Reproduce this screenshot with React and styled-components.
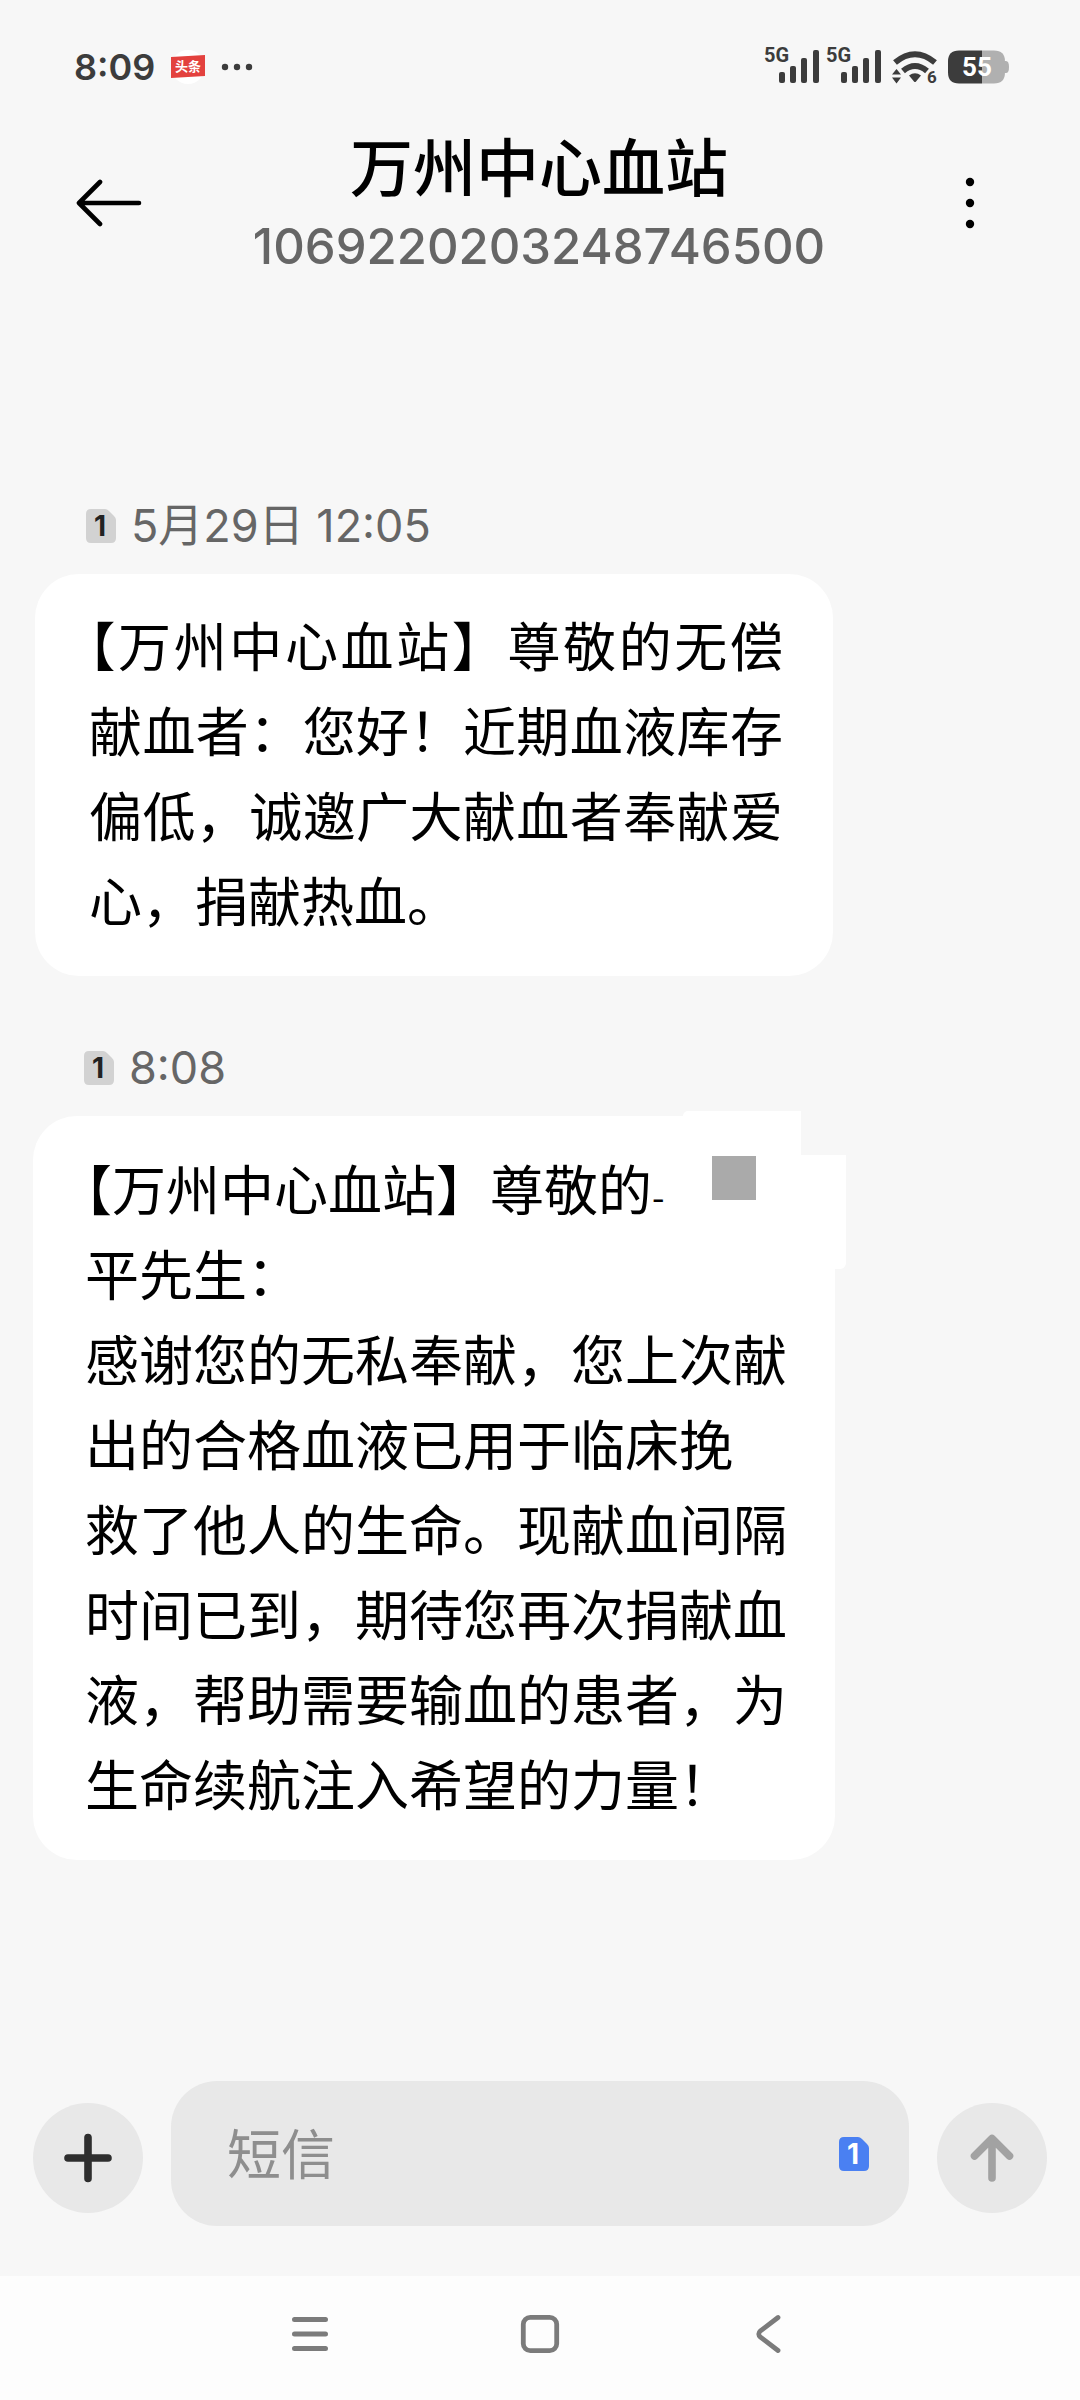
import styled, { createGlobalStyle } from 'styled-components';

const messages = [
  {
    id: 1,
    date: '5月29日 12:05',
    lines: [
      '【万州中心血站】尊敬的无偿献血者：您好！近期血液库存偏低，诚邀广大献血者奉献爱心，捐献热血。',
    ],
  },
  {
    id: 2,
    date: '8:08',
    masked: true,
    lines: [
      '【万州中心血站】尊敬的',
      '平先生：',
      '感谢您的无私奉献，您上次献出的合格血液已用于临床挽',
      '救了他人的生命。现献血间隔时间已到，期待您再次捐献血液，帮助需要输血的患者，为生命续航注入希望的力量！',
    ],
  },
];

const Signal = () => (
  <svg width="56" height="48" viewBox="0 -1 56 48" aria-hidden="true">
    <SmallLabel x="0" y="18">
      5G
    </SmallLabel>
    <g fill="#3c3c3c">
      <rect x="15" y="28" width="6" height="11" rx="2" />
      <rect x="26" y="22" width="6" height="17" rx="2" />
      <rect x="37" y="14" width="6" height="25" rx="2" />
      <rect x="49" y="6" width="6" height="33" rx="2" />
    </g>
  </svg>
);

const Wifi = () => (
  <svg width="46" height="48" viewBox="0 -1 46 48" aria-hidden="true">
    <g fill="none" stroke="#3c3c3c" strokeWidth="6">
      <path d="M3 18.5Q23 2 43 18.5" />
      <path d="M11 27Q23 17 35 27" />
    </g>
    <path
      d="M17 31.5Q23 27 29 31.5L24 37.6Q23 38.6 22 37.6Z"
      fill="#3c3c3c"
    />
    <path d="M0 30.5L4.5 25L9 30.5ZM0 33.5L4.5 39.5L9 33.5Z" fill="#3c3c3c" />
    <WifiLabel x="35" y="39">
      6
    </WifiLabel>
  </svg>
);

const Battery = () => (
  <svg width="62" height="34" viewBox="0 0 62 34" aria-label="55%">
    <path d="M56 11h2q3 0 3 6t-3 6h-2z" fill="#b0b0b0" />
    <path d="M34 0.5h12q11 0 11 11v11q0 11-11 11H34z" fill="#b0b0b0" />
    <path d="M34 0.5H11q-11 0-11 11v11q0 11 11 11h23z" fill="#3c3c3c" />
    <BatteryLabel x="29" y="26" textAnchor="middle">
      55
    </BatteryLabel>
  </svg>
);

const NewsBadge = () => (
  <svg width="36" height="36" viewBox="0 0 36 36" aria-hidden="true">
    <circle cx="18" cy="18" r="17" fill="#fff" />
    <path d="M1 8L35 6V27L1 29Z" fill="#e3413e" />
    <NewsLabel x="18" y="22" textAnchor="middle">
      头条
    </NewsLabel>
  </svg>
);

const SimBadge = ({ fill, color }) => (
  <svg width="30" height="34" viewBox="0 0 30 34" aria-label="SIM 1">
    <path
      d="M5 0H19Q21 0 23 2L28 7Q30 9 30 11V29Q30 34 25 34H5Q0 34 0 29V5Q0 0 5 0Z"
      fill={fill}
    />
    <SimLabel x="14" y="27" textAnchor="middle" fill={color}>
      1
    </SimLabel>
  </svg>
);

const Message = ({ message }) => (
  <Item $masked={message.masked}>
    <Meta>
      <SimBadge fill="#d2d2d2" color="#222" />
      <time>{message.date}</time>
    </Meta>
    <Bubble $masked={message.masked}>
      {message.lines.map((line, i) => (
        <Line key={line}>
          {line}
          {message.masked && i === 0 && <Trace>-</Trace>}
        </Line>
      ))}
      {message.masked && (
        <>
          <Notch />
          <TopPatch />
          <SidePatch />
          <GreySquare />
        </>
      )}
    </Bubble>
  </Item>
);

const App = () => {
  return (
    <Page lang="zh-CN">
      <GlobalStyle />
      <StatusBar>
        <StatusGroup>
          <Clock>8:09</Clock>
          <NewsBadge />
          <svg width="32" height="8" viewBox="0 0 32 8" aria-hidden="true">
            <g fill="#3c3c3c">
              <circle cx="4" cy="4" r="3.2" />
              <circle cx="16" cy="4" r="3.2" />
              <circle cx="28" cy="4" r="3.2" />
            </g>
          </svg>
        </StatusGroup>
        <Indicators>
          <Signals>
            <Signal />
            <Signal />
          </Signals>
          <Wifi />
          <Battery />
        </Indicators>
      </StatusBar>

      <Header>
        <IconButton type="button" aria-label="返回">
          <svg width="66" height="50" viewBox="0 0 66 50">
            <path
              d="M24 4L3 25L24 46M4 25H63"
              fill="none"
              stroke="#000"
              strokeWidth="4.6"
              strokeLinecap="round"
              strokeLinejoin="round"
            />
          </svg>
        </IconButton>
        <Heading>
          <Title>万州中心血站</Title>
          <Number>1069220203248746500</Number>
        </Heading>
        <IconButton type="button" aria-label="更多">
          <svg width="66" height="52" viewBox="0 0 66 52">
            <circle cx="34" cy="5" r="4.2" />
            <circle cx="34" cy="26" r="4.2" />
            <circle cx="34" cy="47" r="4.2" />
          </svg>
        </IconButton>
      </Header>

      <List>
        {messages.map(message => (
          <Message key={message.id} message={message} />
        ))}
      </List>

      <Composer>
        <RoundButton type="button" aria-label="添加">
          <svg width="50" height="50" viewBox="0 0 50 50">
            <path
              d="M25 4.5V45.5M5 25H45"
              stroke="#2e2e2e"
              strokeWidth="7.6"
              strokeLinecap="round"
            />
          </svg>
        </RoundButton>
        <Field>
          <Input type="text" placeholder="短信" aria-label="短信" />
          <SimBadge fill="#4a80f2" color="#fff" />
        </Field>
        <RoundButton type="button" aria-label="发送">
          <svg width="50" height="50" viewBox="0 0 50 50">
            <path
              d="M25 45V6M7.5 23L25 5.5L42.5 23"
              fill="none"
              stroke="#a2a2a2"
              strokeWidth="7.6"
              strokeLinecap="round"
              strokeLinejoin="round"
            />
          </svg>
        </RoundButton>
      </Composer>

      <NavBar>
        <NavButton type="button" aria-label="最近任务">
          <svg width="40" height="40" viewBox="0 0 40 40">
            <path
              d="M4.5 5.5H35.5M4.5 20H35.5M4.5 34.5H35.5"
              stroke="#7b7b7b"
              strokeWidth="5"
              strokeLinecap="round"
            />
          </svg>
        </NavButton>
        <NavButton type="button" aria-label="主页">
          <svg width="40" height="40" viewBox="0 0 40 40">
            <rect
              x="3.3"
              y="3.3"
              width="33.4"
              height="33.4"
              rx="7"
              fill="none"
              stroke="#7b7b7b"
              strokeWidth="4.8"
            />
          </svg>
        </NavButton>
        <NavButton type="button" aria-label="后退">
          <svg width="40" height="40" viewBox="0 0 40 40">
            <path
              d="M28 3.5L10.5 16.8Q7 20 10.5 23.2L28 36.5"
              fill="none"
              stroke="#7b7b7b"
              strokeWidth="4.8"
              strokeLinecap="round"
            />
          </svg>
        </NavButton>
      </NavBar>
    </Page>
  );
};

export default App;

const GlobalStyle = createGlobalStyle`
  body {
    margin: 0;
    background-color: #f7f7f7;
    font-family: Inter, 'Noto Sans CJK SC', sans-serif;
  }

  * {
    box-sizing: border-box;
  }

  svg {
    display: block;
    flex-shrink: 0;
  }
`;

const Page = styled.div`
  display: flex;
  flex-direction: column;
  min-height: 100vh;
`;

const StatusBar = styled.div`
  display: flex;
  align-items: center;
  justify-content: space-between;
  height: 125px;
  padding: 8px 70px 0 74px;
`;

const StatusGroup = styled.div`
  display: flex;
  align-items: center;
  gap: 15px;
`;

const Indicators = styled.div`
  display: flex;
  align-items: center;
  gap: 10px;
`;

const Signals = styled.div`
  display: flex;
  gap: 6px;
`;

const Clock = styled.span`
  font-size: 36px;
  font-weight: 600;
  line-height: 44px;
  color: #3c3c3c;
`;

const SmallLabel = styled.text`
  font-family: Roboto, sans-serif;
  font-size: 20px;
  font-weight: 700;
  fill: #3c3c3c;
`;

const WifiLabel = styled(SmallLabel)`
  font-size: 17px;
`;

const BatteryLabel = styled(SmallLabel)`
  font-size: 26px;
  fill: #fff;
`;

const NewsLabel = styled.text`
  font-family: 'Noto Sans CJK SC', sans-serif;
  font-size: 13px;
  font-weight: 700;
  fill: #fff;
`;

const SimLabel = styled.text`
  font-family: Inter, sans-serif;
  font-size: 28px;
  font-weight: 700;
`;

const Header = styled.header`
  display: flex;
  align-items: center;
  justify-content: space-between;
  padding: 0 78px 0 76px;
`;

const IconButton = styled.button`
  padding: 0;
  border: none;
  background: none;
`;

const Heading = styled.div`
  text-align: center;
`;

const Title = styled.h1`
  margin: 0 0 10px;
  font-family: 'Noto Sans CJK SC', sans-serif;
  font-size: 63px;
  font-weight: 500;
  line-height: 78px;
  color: #000;
`;

const Number = styled.p`
  margin: 0;
  font-size: 49px;
  font-weight: 500;
  line-height: 68px;
  color: #666;
`;

const List = styled.main`
  display: flex;
  flex: 1;
  flex-direction: column;
  gap: 62px;
  padding: 215px 0 62px;
`;

const Item = styled.article`
  padding: ${props => (props.$masked ? '0 245px 0 33px' : '0 247px 0 35px')};
`;

const Meta = styled.div`
  display: flex;
  align-items: center;
  gap: 15px;
  height: 60px;
  margin-bottom: 18px;
  padding-left: 51px;
  font-size: 45px;
  line-height: 60px;
  color: #666;
`;

const Bubble = styled.div`
  position: relative;
  padding: ${props =>
    props.$masked ? '29px 48px 35px 52px' : '28px 50px 34px 54px'};
  border-radius: 44px;
  background-color: #fff;
  font-family: 'Noto Sans CJK SC', sans-serif;
  font-size: ${props => (props.$masked ? '54px' : '53px')};
  line-height: 85px;
  color: #000;
`;

const Line = styled.p`
  margin: 0;
  text-align: justify;
  text-spacing-trim: trim-start;
`;

const Trace = styled.span`
  font-size: 36px;
  line-height: 1;
`;

const Patch = styled.span`
  position: absolute;
  background-color: #fff;
`;

const Notch = styled(Patch)`
  top: 0;
  right: 0;
  width: 34px;
  height: 39px;
  background-color: #f7f7f7;
`;

const TopPatch = styled(Patch)`
  top: -5px;
  right: 34px;
  width: 118px;
  height: 60px;
  border-top-left-radius: 5px;
`;

const SidePatch = styled(Patch)`
  top: 39px;
  right: -11px;
  width: 60px;
  height: 114px;
  border-bottom-right-radius: 6px;
`;

const GreySquare = styled(Patch)`
  top: 40px;
  right: 79px;
  width: 44px;
  height: 44px;
  background-color: #aaa;
`;

const Composer = styled.form`
  display: flex;
  align-items: flex-end;
  gap: 28px;
  padding: 0 33px 50px;
`;

const RoundButton = styled.button`
  display: flex;
  align-items: center;
  justify-content: center;
  flex-shrink: 0;
  width: 110px;
  height: 110px;
  margin-bottom: 13px;
  padding: 0;
  border: none;
  border-radius: 50%;
  background-color: #e8e8e8;
`;

const Field = styled.div`
  display: flex;
  align-items: center;
  flex: 1;
  min-width: 0;
  height: 145px;
  padding: 0 40px 0 56px;
  border-radius: 46px;
  background-color: #e8e8e8;
`;

const Input = styled.input`
  flex: 1;
  min-width: 0;
  padding: 0 0 4px;
  border: none;
  outline: none;
  background: none;
  font-family: 'Noto Sans CJK SC', sans-serif;
  font-size: 54px;
  color: #000;

  &::placeholder {
    color: #8e8e8e;
    opacity: 1;
  }
`;

const NavBar = styled.nav`
  display: flex;
  align-items: center;
  justify-content: center;
  gap: 190px;
  height: 124px;
  padding-bottom: 8px;
  background-color: #fdfdfd;
`;

const NavButton = styled(IconButton)`
  width: 40px;
  height: 40px;
`;
